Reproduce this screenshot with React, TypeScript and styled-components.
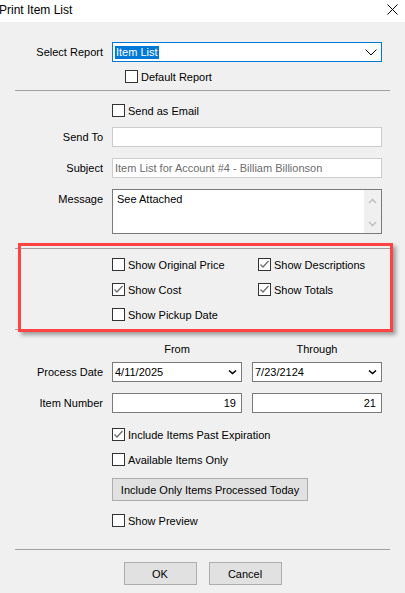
import React from "react"
import styled, { createGlobalStyle } from "styled-components"

const GlobalStyle = createGlobalStyle`
  html, body {
    margin: 0;
    padding: 0;
    background: #f0f0f0;
  }
  body {
    font-family: "Liberation Sans", Arial, sans-serif;
    font-size: 11px;
    color: #000;
  }
`

const Window = styled.div`
  width: 405px;
  height: 593px;
  background: #f0f0f0;
  overflow: hidden;
`

const TitleBar = styled.div`
  height: 22px;
  background: #fff;
  display: flex;
  align-items: center;
  justify-content: space-between;
`

const Title = styled.span`
  font-size: 12px;
  margin-left: -1px;
  margin-top: -2px;
`

const CloseGlyph = styled.svg`
  width: 11px;
  height: 11px;
  margin-right: 7px;
  margin-top: -4px;
`

const FormRow = styled.div<{ $mt: number; $height?: number }>`
  display: grid;
  grid-template-columns: 112px 270px;
  align-items: center;
  margin-top: ${p => p.$mt}px;
  height: ${p => (p.$height ? `${p.$height}px` : "auto")};
`

const Label = styled.label<{ $top?: boolean }>`
  text-align: right;
  padding-right: 9px;
  align-self: ${p => (p.$top ? "start" : "center")};
  padding-top: ${p => (p.$top ? "4px" : "0")};
`

const Divider = styled.div<{ $mt: number }>`
  height: 1px;
  margin: ${p => p.$mt}px 15px 0;
  background: #a0a0a0;
`

const Combo = styled.div<{ $focused?: boolean }>`
  height: 20px;
  box-sizing: border-box;
  border: 1px solid ${p => (p.$focused ? "#0078d7" : "#7a7a7a")};
  background: #fff;
  display: flex;
  align-items: center;
  justify-content: space-between;
  padding: 0 4px 0 2px;
`

const Selected = styled.span`
  background: #0078d7;
  color: #fff;
  padding: 0 1px;
  line-height: 13px;
`

const ComboText = styled.span``

const TextBox = styled.div<{ $light?: boolean; $align?: string }>`
  height: 20px;
  box-sizing: border-box;
  border: 1px solid ${p => (p.$light ? "#cccccc" : "#7a7a7a")};
  background: #fff;
  display: flex;
  align-items: center;
  justify-content: ${p => (p.$align === "right" ? "flex-end" : "flex-start")};
  padding: 0 5px 0 2px;
`

const Muted = styled.span`
  color: #6d6d6d;
`

const MemoBox = styled.div`
  height: 45px;
  box-sizing: border-box;
  border: 1px solid #7a7a7a;
  background: #fff;
  display: flex;
`

const MemoText = styled.div`
  flex: 1;
  padding: 3px 4px;
`

const ScrollTrack = styled.div`
  width: 17px;
  background: #f0f0f0;
  display: flex;
  flex-direction: column;
  justify-content: space-between;
  align-items: center;
  padding: 8px 0 6px;
`

const CheckRow = styled.label<{ $indent?: number }>`
  display: flex;
  align-items: center;
  gap: 3px;
  height: 13px;
  margin-left: ${p => p.$indent || 0}px;
`

const Box = styled.span`
  width: 13px;
  height: 13px;
  box-sizing: border-box;
  border: 1px solid #333;
  background: #fff;
  display: inline-flex;
  align-items: center;
  justify-content: center;
  flex-shrink: 0;
`

const Group = styled.div`
  position: relative;
  margin-top: 14px;
`

const GroupRule = styled.div`
  height: 1px;
  margin: 0 15px;
  background: #a0a0a0;
`

const OptionGrid = styled.div`
  display: grid;
  grid-template-columns: 146px 130px;
  row-gap: 12px;
  margin: 9px 0 8px 112px;
`

const Highlight = styled.div`
  position: absolute;
  left: 18px;
  top: -5px;
  width: 375px;
  height: 89px;
  box-sizing: border-box;
  border: 3px solid #ff4343;
  box-shadow: 3px 3px 4px rgba(0, 0, 0, 0.35);
  pointer-events: none;
`

const ColumnHeads = styled.div`
  display: grid;
  grid-template-columns: 130px 130px;
  column-gap: 10px;
  margin: 13px 0 0 112px;
  line-height: 13px;
  text-align: center;
`

const Pair = styled.div`
  display: grid;
  grid-template-columns: 130px 130px;
  column-gap: 10px;
`

const Control = styled.div`
  grid-column: 2;
`

const Button = styled.button<{ $width: number }>`
  width: ${p => p.$width}px;
  height: 23px;
  box-sizing: border-box;
  border: 1px solid #adadad;
  background: #e1e1e1;
  font-family: inherit;
  font-size: 11px;
  color: #000;
  padding: 0;
`

const ButtonBar = styled.div`
  display: flex;
  justify-content: center;
  gap: 12px;
  margin-top: 12px;
`

const Chevron = ({ bold }: { bold?: boolean }) =>
  bold ? (
    <svg width="9" height="6" viewBox="0 0 9 6">
      <path d="M1 1.5 L4.5 4.5 L8 1.5" fill="none" stroke="#000" strokeWidth="1.6" />
    </svg>
  ) : (
    <svg width="12" height="7" viewBox="0 0 12 7">
      <path d="M0.5 0.5 L6 6 L11.5 0.5" fill="none" stroke="#000" strokeWidth="1" />
    </svg>
  )

const Arrow = ({ up }: { up?: boolean }) => (
  <svg width="9" height="6" viewBox="0 0 9 6">
    <path
      d={up ? "M1 5 L4.5 1.5 L8 5" : "M1 1 L4.5 4.5 L8 1"}
      fill="none"
      stroke="#c2c2c2"
      strokeWidth="1.6"
    />
  </svg>
)

const Check = ({ label, checked, indent }: { label: string; checked?: boolean; indent?: number }) => (
  <CheckRow $indent={indent}>
    <Box>
      {checked && (
        <svg width="11" height="11" viewBox="0 0 11 11">
          <path d="M1.5 5.5 L4 8 L9.5 2" fill="none" stroke="#6e6e6e" strokeWidth="1.3" />
        </svg>
      )}
    </Box>
    {label}
  </CheckRow>
)

export default function App() {
  return (
    <Window>
      <GlobalStyle />
      <TitleBar>
        <Title>Print Item List</Title>
        <CloseGlyph viewBox="0 0 11 11">
          <path d="M0.5 0.5 L10.5 10.5 M10.5 0.5 L0.5 10.5" stroke="#000" strokeWidth="1" />
        </CloseGlyph>
      </TitleBar>

      <FormRow $mt={20}>
        <Label>Select Report</Label>
        <Combo $focused>
          <Selected>Item List</Selected>
          <Chevron />
        </Combo>
      </FormRow>
      <FormRow $mt={8}>
        <Control>
          <Check label="Default Report" indent={13} />
        </Control>
      </FormRow>

      <Divider $mt={7} />

      <FormRow $mt={13}>
        <Control>
          <Check label="Send as Email" />
        </Control>
      </FormRow>
      <FormRow $mt={10}>
        <Label>Send To</Label>
        <TextBox $light />
      </FormRow>
      <FormRow $mt={11}>
        <Label>Subject</Label>
        <TextBox $light>
          <Muted>Item List for Account #4 - Billiam Billionson</Muted>
        </TextBox>
      </FormRow>
      <FormRow $mt={11}>
        <Label $top>Message</Label>
        <MemoBox>
          <MemoText>See Attached</MemoText>
          <ScrollTrack>
            <Arrow up />
            <Arrow />
          </ScrollTrack>
        </MemoBox>
      </FormRow>

      <Group>
        <GroupRule />
        <OptionGrid>
          <Check label="Show Original Price" />
          <Check label="Show Descriptions" checked />
          <Check label="Show Cost" checked />
          <Check label="Show Totals" checked />
          <Check label="Show Pickup Date" />
        </OptionGrid>
        <GroupRule />
        <Highlight />
      </Group>

      <ColumnHeads>
        <span>From</span>
        <span>Through</span>
      </ColumnHeads>
      <FormRow $mt={6}>
        <Label>Process Date</Label>
        <Pair>
          <Combo>
            <ComboText>4/11/2025</ComboText>
            <Chevron bold />
          </Combo>
          <Combo>
            <ComboText>7/23/2124</ComboText>
            <Chevron bold />
          </Combo>
        </Pair>
      </FormRow>
      <FormRow $mt={11}>
        <Label>Item Number</Label>
        <Pair>
          <TextBox $align="right">19</TextBox>
          <TextBox $align="right">21</TextBox>
        </Pair>
      </FormRow>

      <FormRow $mt={15}>
        <Control>
          <Check label="Include Items Past Expiration" checked />
        </Control>
      </FormRow>
      <FormRow $mt={12}>
        <Control>
          <Check label="Available Items Only" />
        </Control>
      </FormRow>
      <FormRow $mt={12}>
        <Control>
          <Button $width={196}>Include Only Items Processed Today</Button>
        </Control>
      </FormRow>
      <FormRow $mt={13}>
        <Control>
          <Check label="Show Preview" />
        </Control>
      </FormRow>

      <Divider $mt={22} />

      <ButtonBar>
        <Button $width={73}>OK</Button>
        <Button $width={73}>Cancel</Button>
      </ButtonBar>
    </Window>
  )
}
